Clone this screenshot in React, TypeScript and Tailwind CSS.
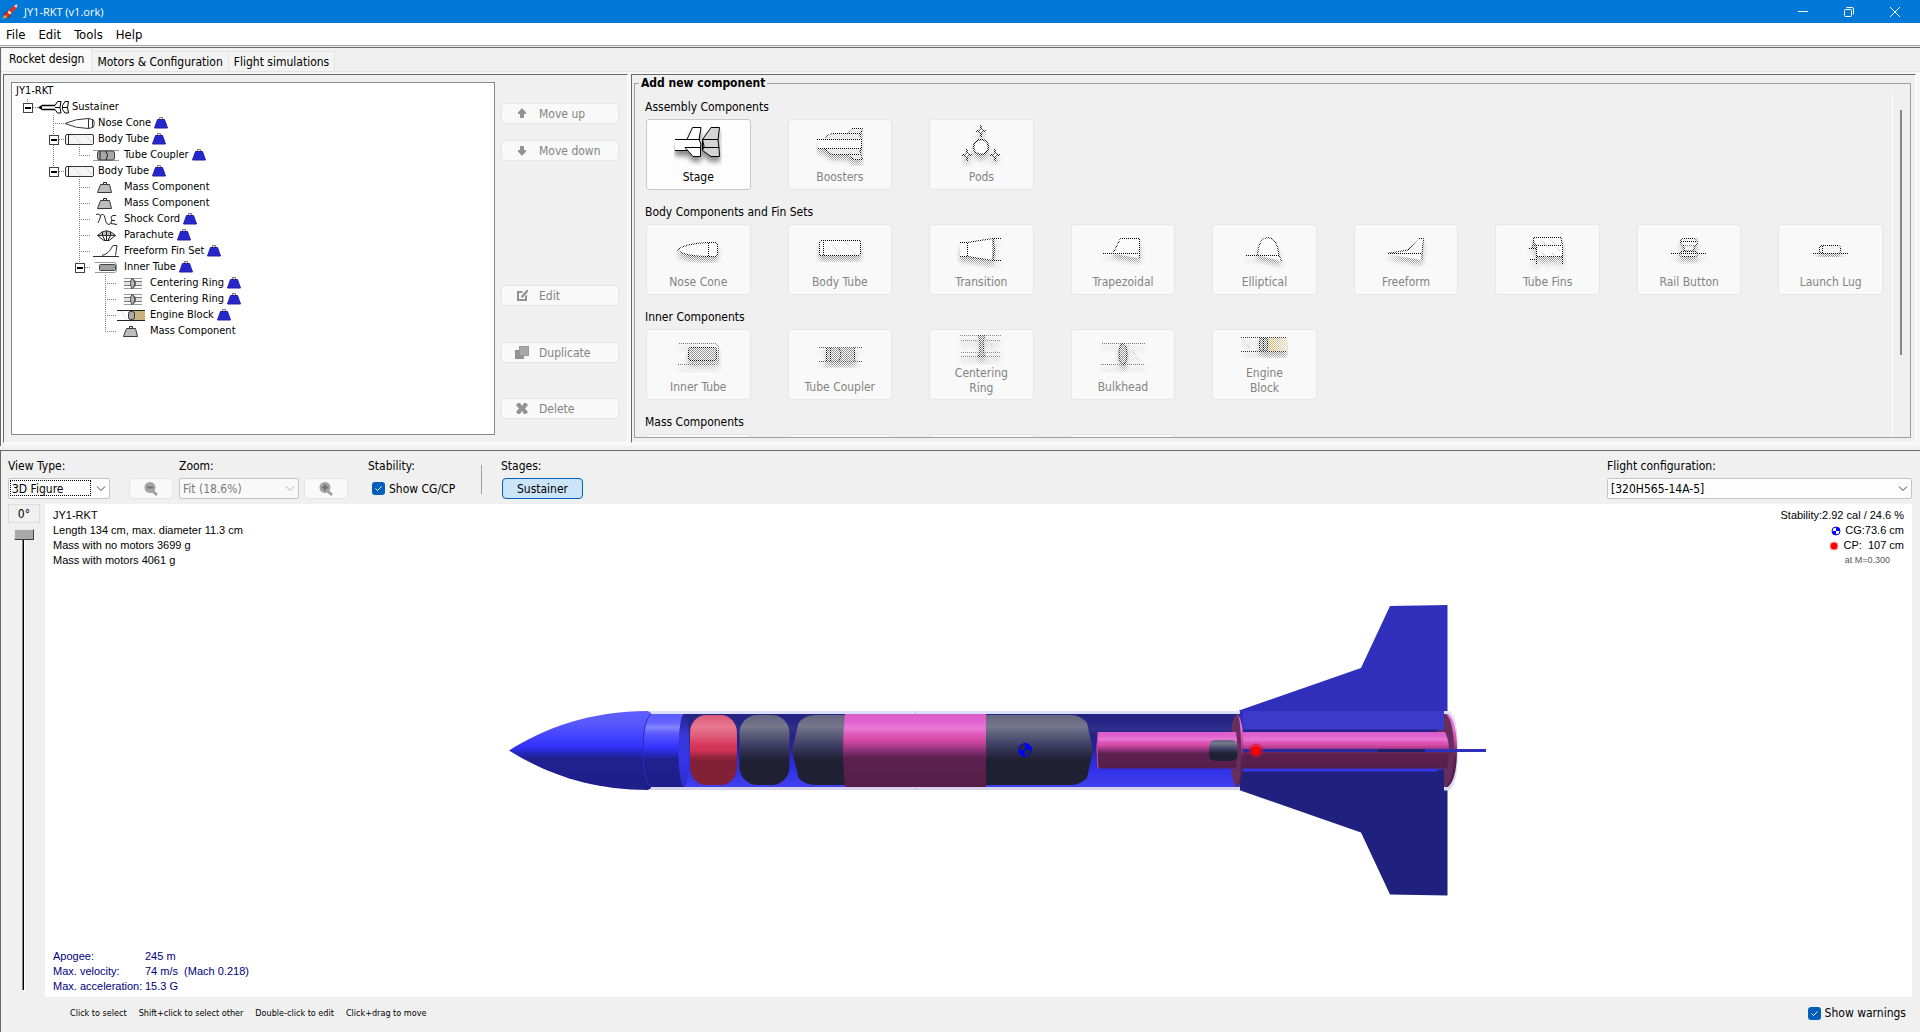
import React from 'react';
import clsx from 'clsx';

const ui = 'font-["DejaVu_Sans_Condensed","Noto_Sans",sans-serif]';

/* ---------- tree ---------- */

type Guide = '' | 'v' | 't' | 'l' | 'box' | 'boxEnd';

interface TreeRow {
  guides: Guide[];
  icon: keyof typeof treeIcons;
  label: string;
  mass?: boolean;
}

const ink = { fill: 'none', stroke: '#222', strokeWidth: 1 };

const treeIcons = {
  stage: (
    <g>
      <path d="M0 8.5 L4 6 V11 Z" fill="#000" />
      <path d="M4 6.5 H18 M4 10.5 H18" stroke="#000" strokeWidth="1.5" fill="none" />
      <path d="M17 6.5 L19.5 2.5 H23 L22 8.5 L23 14 H19.5 L17 10.5 M17 8.5 H22" fill="#fff" stroke="#000" />
      <path d="M24.5 6.5 L27 2.5 H30.5 L29.5 8.5 L30.5 14 H27 L24.5 10.5 Z M24.5 8.5 H29.5" fill="#fff" stroke="#000" />
    </g>
  ),
  noseCone: (
    <path d="M1 8.5 Q12 3.5 24.5 3.5 V13.5 Q12 13.5 1 8.5 Z M24.5 3.5 L28.5 4.5 V12.5 L24.5 13.5 M28.5 4 Q32 8.5 28.5 13" fill="#fff" stroke="#333" />
  ),
  bodyTube: (
    <g>
      <rect x="1.5" y="3.5" width="28" height="10" rx="1.5" fill="#f4f4f4" stroke="#333" />
      <path d="M4.5 4 V13" {...ink} />
      <path d="M9 4 L17 13 M21 4 L29 13" stroke="#ddd" />
    </g>
  ),
  coupler: (
    <g>
      <path d="M3 3.5 H29 M3 13.5 H29" stroke="#999" />
      <rect x="7.5" y="4" width="17" height="9" rx="2" fill="#a8a8a8" stroke="#444" />
      <path d="M16 4 Q19 8.5 16 13 M10 4 V13" {...ink} />
    </g>
  ),
  mass: (
    <g>
      <path d="M10.5 5.5 H19.5 L21.5 13.5 H7.5 Z" fill="#bdbdbd" stroke="#3a3a3a" />
      <path d="M13.5 5 V3.5 H16.5 V5" {...ink} />
    </g>
  ),
  shockCord: (
    <path d="M6 3.5 Q10 2 10.5 6 Q9 10 8 12 M10 4.5 Q14 1.5 15 7 Q16 13.5 19 13.5 Q21 13 22 9 Q20 5.5 23 4.5 H26 M22 9.5 H25 M21 12.5 L27 13.5" {...ink} />
  ),
  parachute: (
    <g>
      <path d="M7.5 8.5 Q16.5 -1 25.5 8.5 Z" fill="#bbb" stroke="#333" />
      <path d="M7.5 8.5 L14 13.5 H19 L25.5 8.5 M12.5 5 V8.5 L15 13.5 M20.5 5 V8.5 L18 13.5 M16.5 4 V13" {...ink} />
    </g>
  ),
  freeform: (
    <g>
      <path d="M12 12.5 Q19 10.5 22 4 L23 2.5 H27 L25.5 12.5" fill="#fff" stroke="#333" />
      <path d="M3 13.5 H29" stroke="#333" />
    </g>
  ),
  innerTube: (
    <g>
      <path d="M5 3.5 H24 Q26.5 3.5 26.5 6 V11 Q26.5 13.5 24 13.5 H5" fill="none" stroke="#999" />
      <rect x="9.5" y="5.5" width="16" height="6" rx="1" fill="#a0a0a0" stroke="#444" />
    </g>
  ),
  centeringRing: (
    <g>
      <path d="M8 3.5 H26 M8 13.5 H26" stroke="#999" />
      <rect x="8" y="6" width="18" height="5" fill="#e0e0e0" />
      <path d="M8 6.5 H26 M8 10.5 H26" stroke="#777" />
      <path d="M15 3.5 Q20 5 19.5 8.5 Q20 12 15 13.5" fill="none" stroke="#444" />
      <ellipse cx="16.5" cy="8.5" rx="2" ry="4.5" fill="#bbb" stroke="#444" />
    </g>
  ),
  engineBlock: (
    <g>
      <rect x="18" y="3" width="11" height="11" fill="#c9b27c" />
      <path d="M1 3.5 H29 M1 13.5 H29" stroke="#222" />
      <path d="M5 4 L11 13" stroke="#ddd" />
      <rect x="12.5" y="4.5" width="6" height="8" rx="2" fill="#aaa" stroke="#333" />
    </g>
  ),
};

const treeRows: TreeRow[] = [
  { guides: ['boxEnd'], icon: 'stage', label: 'Sustainer' },
  { guides: ['', 't'], icon: 'noseCone', label: 'Nose Cone', mass: true },
  { guides: ['', 'box'], icon: 'bodyTube', label: 'Body Tube', mass: true },
  { guides: ['', 'v', 'l'], icon: 'coupler', label: 'Tube Coupler', mass: true },
  { guides: ['', 'boxEnd'], icon: 'bodyTube', label: 'Body Tube', mass: true },
  { guides: ['', '', 't'], icon: 'mass', label: 'Mass Component' },
  { guides: ['', '', 't'], icon: 'mass', label: 'Mass Component' },
  { guides: ['', '', 't'], icon: 'shockCord', label: 'Shock Cord', mass: true },
  { guides: ['', '', 't'], icon: 'parachute', label: 'Parachute', mass: true },
  { guides: ['', '', 't'], icon: 'freeform', label: 'Freeform Fin Set', mass: true },
  { guides: ['', '', 'boxEnd'], icon: 'innerTube', label: 'Inner Tube', mass: true },
  { guides: ['', '', '', 't'], icon: 'centeringRing', label: 'Centering Ring', mass: true },
  { guides: ['', '', '', 't'], icon: 'centeringRing', label: 'Centering Ring', mass: true },
  { guides: ['', '', '', 't'], icon: 'engineBlock', label: 'Engine Block', mass: true },
  { guides: ['', '', '', 'l'], icon: 'mass', label: 'Mass Component' },
];

const GuideCell: React.FC<{ kind: Guide }> = ({ kind }) => {
  const dots = { stroke: '#808080', strokeWidth: 1, strokeDasharray: '1 1', fill: 'none' };

  if (kind === 'box' || kind === 'boxEnd') {
    return (
      <button type="button" aria-label="Collapse" className="block h-4 w-[26px] shrink-0">
        <svg width="26" height="16" className="block">
          <path d={kind === 'box' ? 'M15.5 0 V16 M15 8.5 H26' : 'M15.5 0 V8 M15 8.5 H26'} {...dots} />
          <rect x="11.5" y="4.5" width="9" height="9" fill="#fff" stroke="#404040" />
          <path d="M13 9 H19" stroke="#000" strokeWidth="2" />
        </svg>
      </button>
    );
  }

  return (
    <svg width="26" height="16" className="block shrink-0">
      {kind === 'v' && <path d="M15.5 0 V16" {...dots} />}
      {kind === 't' && <path d="M15.5 0 V16 M15 8.5 H26" {...dots} />}
      {kind === 'l' && <path d="M15.5 0 V8 M15 8.5 H26" {...dots} />}
    </svg>
  );
};

const MassBadge = () => (
  <svg width="14" height="12" className="ml-[3px] block shrink-0">
    <path d="M5.5 2.5 V0.5 H8.5 V2.5" fill="none" stroke="#777" />
    <path d="M3.5 2.5 H10.5 L13.5 11 H0.5 Z" fill="#2727d0" stroke="#2222a0" />
  </svg>
);

const ComponentTree = () => (
  <div className="flex-1 border border-[#828790] bg-white text-[11px] leading-4 text-black">
    <div className="pl-1">JY1-RKT</div>
    {treeRows.map((row, i) => (
      <div key={i} className="flex h-4 items-center">
        {row.guides.map((g, j) => (
          <GuideCell key={j} kind={g} />
        ))}
        <svg width="32" height="16" className="block shrink-0">
          {treeIcons[row.icon]}
        </svg>
        <span className="ml-[2px] whitespace-nowrap">{row.label}</span>
        {row.mass && <MassBadge />}
      </div>
    ))}
  </div>
);

/* ---------- tree actions ---------- */

const actions = [
  { label: 'Move up', gap: 'mt-[21px]', icon: <path d="M7 1 L11 5.5 V7 H9 V11 H5 V7 H3 V5.5 Z" /> },
  { label: 'Move down', gap: 'mt-4', icon: <path d="M7 12 L11 7.5 V6 H9 V2 H5 V6 H3 V7.5 Z" /> },
  {
    label: 'Edit',
    gap: 'mt-[124px]',
    icon: <path d="M2 2 H8 L7 4 H4 V10 H10 V7.5 L12 5.5 V12 H2 Z M12 0.5 L13.5 2 L8.5 8 L6 9 L6.5 6.5 Z" />,
  },
  {
    label: 'Duplicate',
    gap: 'mt-9',
    icon: (
      <g>
        <rect x="4.5" y="0.5" width="9" height="9" fill="#a8a8a8" stroke="#989898" />
        <path d="M0 4 H4 V10 H9 V13 H0 Z" />
      </g>
    ),
  },
  {
    label: 'Delete',
    gap: 'mt-[35px]',
    icon: <path d="M3 1 H5 L7 4 L9 1 H11 L13 3 L10 6.5 L13 10 L11 12 H9 L7 9 L5 12 H3 L1 10 L4 6.5 L1 3 Z" />,
  },
];

const TreeActions = () => (
  <div className="ml-1.5 mr-2 flex w-[118px] flex-col">
    {actions.map(a => (
      <button
        key={a.label}
        type="button"
        disabled
        className={clsx(
          'flex h-[21px] shrink-0 items-center gap-2.5 rounded-[3px] border border-[#e6e6e6] bg-[#f9f9f9] pl-[13px] text-[12px] leading-4 text-[#838383]',
          a.gap
        )}
      >
        <svg width="14" height="13" fill="#929292" className="block">
          {a.icon}
        </svg>
        {a.label}
      </button>
    ))}
  </div>
);

/* ---------- component palette ---------- */

interface PaletteItem {
  label: string;
  icon: React.ReactNode;
  enabled?: boolean;
  twoLines?: boolean;
}

// four-pointed pod cross section
const star = (x: number, y: number) => (
  <path d={`M${x} ${y - 6} L${x + 1} ${y - 1} L${x + 5} ${y} L${x + 1} ${y + 1} L${x} ${y + 6} L${x - 1} ${y + 1} L${x - 5} ${y} L${x - 1} ${y - 1} Z`} fill="#fff" />
);

const palette: { title: string; items: PaletteItem[] }[] = [
  {
    title: 'Assembly Components',
    items: [
      {
        label: 'Stage',
        enabled: true,
        icon: (
          <g>
            <path d="M1 17.5 H26 L26.5 28 H1 Z" fill="#fff" stroke="none" />
            <path d="M1 17.5 H26 M1 28.5 H15 M25 17.5 L27 22 L26 28" />
            <path d="M13 17.5 L18.5 5.5 H27 L25 17.5 Z M11 25.5 H26.5 V34.5 H19 Z" fill="#fff" />
            <path d="M28.5 17.5 L37 5.5 H45.5 L44 17.5 L45 25.5 L45.5 34.5 H37 L28.5 28.5 Z M28.5 17.5 H44 M28.5 25.5 H45 M28.5 17.5 L30 24 L28.5 28.5" fill="#d4d4d4" />
          </g>
        ),
      },
      {
        label: 'Boosters',
        icon: (
          <g>
            <path d="M9.5 16.5 Q11 12.5 17 11.5 H31 L35.5 6.5 H46.5 L44 14 L45.5 17 V26.5 L44 29.5 L46.5 37.5 H38 L31 32.5 H17 Q11 31.5 9.5 27" fill="#ddd" />
            <path d="M2 17.5 H45 V26.5 H2 Z" fill="#fff" stroke="none" />
            <path d="M1 17.5 H45 M1 26.5 H45 M31 11.5 H44 M31 32.5 H44" />
          </g>
        ),
      },
      {
        label: 'Pods',
        icon: (
          <g>
            <circle cx="24" cy="25" r="7.5" fill="#fff" strokeWidth="1.5" />
            {star(24, 9)}
            {star(10, 33)}
            {star(38, 33)}
          </g>
        ),
      },
    ],
  },
  {
    title: 'Body Components and Fin Sets',
    items: [
      {
        label: 'Nose Cone',
        icon: <path d="M3.5 23 Q10 16.5 34.5 15.5 H41 Q43.5 15.5 43.5 18 V27 Q43.5 29.5 41 29.5 H34.5 Q10 29.5 3.5 23 Z M34.5 15.5 V29.5" fill="#fff" />,
      },
      {
        label: 'Body Tube',
        icon: (
          <g>
            <rect x="3.5" y="13.5" width="41" height="15" rx="1.5" fill="#fff" />
            <path d="M7.5 14 V28" />
            <path d="M13 14 L25 28 M28 14 L40 28" stroke="#ccc" />
          </g>
        ),
      },
      {
        label: 'Transition',
        icon: <path d="M3 15.5 H10 L36 11.5 V33.5 L10 29.5 H3 M10.5 15.5 V29.5 M36 11.5 Q39 22 36 33.5 M36 11.5 H44 M36 33.5 H44" fill="#fff" />,
      },
      {
        label: 'Trapezoidal',
        icon: <path d="M14 26.5 L21.5 11.5 H40.5 V31 M4 26.5 H40" fill="#fff" />,
      },
      {
        label: 'Elliptical',
        icon: <path d="M17.5 28 Q18.5 10.5 28 10.5 Q37 10.5 39 28 L41.5 34 M5 28.5 H39" fill="#fff" />,
      },
      {
        label: 'Freeform',
        icon: <path d="M5 26.5 L26 23 L36.5 11.5 H41.5 L40 26.5 V33 M5 26.5 H40" fill="#fff" />,
      },
      {
        label: 'Tube Fins',
        icon: (
          <g>
            <path d="M9.5 10.5 H37 L38.5 18.5 V29.5 H12.5 V18.5 L9.5 14 Z" fill="#fff" />
            <path d="M10 18.5 H38 M12.5 29.5 V38 M38.5 29.5 V38 M5 21.5 H12 M5 32.5 H12 M9.5 14 L8.5 21" />
            <path d="M17 12 L25 22 M27 12 L36 24 M17 24 L26 36 M28 26 L36 36" stroke="#bbb" />
          </g>
        ),
      },
      {
        label: 'Rail Button',
        icon: (
          <g>
            <rect x="15.5" y="11.5" width="17" height="7" rx="3" fill="#eee" />
            <path d="M18.5 18.5 L19.5 24 H28.5 L29.5 18.5" fill="#eee" />
            <rect x="14.5" y="24.5" width="18" height="5" rx="2.5" fill="#eee" />
            <path d="M6 26.5 H41 M16 14.5 H32" />
          </g>
        ),
      },
      {
        label: 'Launch Lug',
        icon: (
          <g>
            <rect x="12.5" y="18.5" width="21" height="8" rx="2.5" fill="#eee" />
            <path d="M6 26.5 H41 M15.5 19 V26" />
          </g>
        ),
      },
    ],
  },
  {
    title: 'Inner Components',
    items: [
      {
        label: 'Inner Tube',
        icon: (
          <g>
            <path d="M4 11.5 H41 Q44.5 12 44.5 15 V29 Q44.5 32.5 41 32.5 H4" stroke="#777" fill="none" />
            <rect x="14.5" y="15.5" width="28" height="13" rx="2.5" fill="#999" />
          </g>
        ),
      },
      {
        label: 'Tube Coupler',
        icon: (
          <g>
            <rect x="10.5" y="15.5" width="28" height="14" rx="1.5" fill="#999" />
            <path d="M3 15.5 H46 M3 29.5 H46" stroke="#555" />
            <path d="M22.5 15.5 Q27 22 22.5 29.5 M14.5 16 V29" />
          </g>
        ),
      },
      {
        label: 'Centering Ring',
        twoLines: true,
        icon: (
          <g>
            <path d="M3 3.5 H44 M3 8.5 H44 M3 20.5 H44 M3 24.5 H44" stroke="#888" />
            <path d="M32 9 L40 20" stroke="#bbb" />
            <path d="M21 3.5 H28 L26.5 8 V20 L28 24.5 H21 L23 20 V8 Z" fill="#888" stroke="#333" />
          </g>
        ),
      },
      {
        label: 'Bulkhead',
        icon: (
          <g>
            <path d="M2 11.5 H46 M2 32.5 H46" stroke="#777" />
            <path d="M29 13 L40 28" stroke="#bbb" />
            <ellipse cx="24" cy="22" rx="4" ry="10.5" fill="#999" />
          </g>
        ),
      },
      {
        label: 'Engine Block',
        twoLines: true,
        icon: (
          <g>
            <rect x="26" y="6" width="21" height="14" fill="url(#wood)" stroke="none" />
            <path d="M1 5.5 H47 M1 19.5 H47" stroke="#333" />
            <path d="M3 7 L11 18" stroke="#bbb" />
            <rect x="19.500" y="6" width="8" height="13" rx="3" fill="#888" />
            <path d="M23.5 7 V18" />
          </g>
        ),
      },
    ],
  },
];

const PaletteButton: React.FC<{ item: PaletteItem }> = ({ item }) => {
  const height = item.twoLines ? 34 : 44;

  return (
    <button
      type="button"
      disabled={!item.enabled}
      className={clsx(
        'flex h-[71px] flex-col items-center rounded-[3px] border pt-[2px] text-[12px]',
        item.enabled ? 'border-[#c8c8c8] bg-[#fdfdfd] text-black' : 'border-[#e6e6e6] bg-[#f9f9f9] text-[#838383]'
      )}
    >
      <svg width="48" height={height} className="block shrink-0">
        <g mask={item.enabled ? undefined : 'url(#dither)'}>
          <g fill="none" stroke="#000" filter="url(#iconShadow)">
            {item.icon}
          </g>
        </g>
      </svg>
      <span className={item.twoLines ? 'w-[60px] leading-[15px]' : 'mt-[3px] leading-4'}>{item.label}</span>
    </button>
  );
};

const ComponentPalette = () => (
  <fieldset className="mb-1 ml-[2px] mr-1 flex min-h-0 min-w-0 flex-1 flex-col border border-[#a0a0a0]">
    <legend className="ml-1 px-[2px] text-[12px] leading-4 font-bold">Add new component</legend>
    <div className="flex min-h-0 flex-1 overflow-hidden">
      <div className="min-w-0 flex-1 pl-2.5 pr-[9px] pt-2">
        {palette.map(section => (
          <section key={section.title} className="mb-3.5">
            <h3 className="mb-1 text-[12px] leading-4">{section.title}</h3>
            <div className="grid grid-cols-9 gap-[37px] pl-px">
              {section.items.map(item => (
                <PaletteButton key={item.label} item={item} />
              ))}
            </div>
          </section>
        ))}
        <h3 className="mb-1 text-[12px] leading-4">Mass Components</h3>
        <div className="grid grid-cols-9 gap-[37px] pl-px">
          {[0, 1, 2, 3].map(i => (
            <div key={i} className="h-[3px] rounded-t-[3px] border border-b-0 border-[#e6e6e6] bg-[#f9f9f9]" />
          ))}
        </div>
      </div>
      <div className="mt-[2px] w-[18px] border-l border-white pl-[7px] pt-[17px]">
        <div className="h-[245px] w-[2px] bg-[#878787]" />
      </div>
    </div>
  </fieldset>
);

/* ---------- figure toolbar ---------- */

const Chevron: React.FC<{ className?: string }> = ({ className }) => (
  <svg width="10" height="6" className={clsx('pointer-events-none absolute right-1 top-2', className)}>
    <path d="M1 0.5 L5 4.5 L9 0.5" fill="none" stroke="currentColor" />
  </svg>
);

const selectBase = 'block h-[21px] w-full appearance-none rounded-[2px] border border-[#c4c4c4] pl-[3px] pr-4 text-[12px] leading-4';

const ZoomButton: React.FC<{ label: string; children: React.ReactNode }> = ({ label, children }) => (
  <button
    type="button"
    disabled
    aria-label={label}
    className="flex h-[21px] w-11 items-center justify-center rounded-[3px] border border-[#e6e6e6] bg-[#f9f9f9]"
  >
    <svg width="14" height="14">
      <path d="M8 8.5 L13 13" stroke="#9a9a9a" strokeWidth="2.5" />
      <circle cx="6" cy="5.5" r="5.5" fill="#a4a4a4" />
      {children}
    </svg>
  </button>
);

const CheckBox: React.FC<{ id: string; label: string }> = ({ id, label }) => (
  <div className="flex items-center gap-1">
    <span className="relative block h-[13px] w-[13px]">
      <input id={id} type="checkbox" defaultChecked className="block h-[13px] w-[13px] appearance-none rounded-[3px] bg-[#005fb8]" />
      <svg width="13" height="13" className="pointer-events-none absolute left-0 top-0">
        <path d="M3.5 6.5 L5.5 8.5 L9.5 4.5" fill="none" stroke="#fff" />
      </svg>
    </span>
    <label htmlFor={id} className="text-[12px] leading-4 whitespace-nowrap">{label}</label>
  </div>
);

const FigureToolbar = () => (
  <div className="flex items-end pb-[5px] pl-[7px] pr-2 pt-[7px] text-[12px] leading-4">
    <div className="w-[102px]">
      <label htmlFor="view-type" className="mb-1 block">View Type:</label>
      <div className="relative">
        <select id="view-type" className={clsx(selectBase, 'bg-[#fdfdfd] text-black')}>
          <option>3D Figure</option>
        </select>
        <span className="pointer-events-none absolute bottom-[3px] left-[2px] right-[19px] top-[2px] border border-dotted border-black" />
        <Chevron className="text-[#444]" />
      </div>
    </div>
    <div className="ml-[19px]">
      <ZoomButton label="Zoom out">
        <path d="M3 5.5 H9" stroke="#707070" strokeWidth="2" />
      </ZoomButton>
    </div>
    <div className="ml-1.5 w-[120px]">
      <label htmlFor="zoom" className="mb-1 block">Zoom:</label>
      <div className="relative">
        <select id="zoom" disabled className={clsx(selectBase, 'bg-[#f9f9f9] text-[#7a7a7a] opacity-100')}>
          <option>Fit (18.6%)</option>
        </select>
        <Chevron className="text-[#b0b0b0]" />
      </div>
    </div>
    <div className="ml-[5px]">
      <ZoomButton label="Zoom in">
        <path d="M3 5.5 H9 M6 2.5 V8.5" stroke="#707070" strokeWidth="2" />
      </ZoomButton>
    </div>
    <div className="ml-5 w-[113px]">
      <div className="mb-1">Stability:</div>
      <div className="flex h-[21px] items-center pl-1">
        <CheckBox id="show-cgcp" label="Show CG/CP" />
      </div>
    </div>
    <div className="mb-[5px] h-[29px] w-px bg-[#a0a0a0]" />
    <div className="ml-[19px]">
      <div className="mb-1">Stages:</div>
      <button type="button" className="ml-px h-[21px] w-[81px] rounded-[4px] border border-[#005fb8] bg-[#cce4f7]">
        Sustainer
      </button>
    </div>
    <div className="ml-auto w-[305px]">
      <label htmlFor="flight-config" className="mb-1 block">Flight configuration:</label>
      <div className="relative">
        <select id="flight-config" className={clsx(selectBase, 'bg-[#fdfdfd] text-black')}>
          <option>[320H565-14A-5]</option>
        </select>
        <Chevron className="text-[#444]" />
      </div>
    </div>
  </div>
);

/* ---------- figure ---------- */

const CgMarker: React.FC<{ cx: number; cy: number; r: number; back: string }> = ({ cx, cy, r, back }) => (
  <g>
    <circle cx={cx} cy={cy} r={r} fill={back} stroke="#0000ff" />
    <path
      d={`M${cx} ${cy} V${cy - r} A${r} ${r} 0 0 1 ${cx + r} ${cy} Z M${cx} ${cy} V${cy + r} A${r} ${r} 0 0 1 ${cx - r} ${cy} Z`}
      fill="#0000ff"
    />
  </g>
);

const Stops: React.FC<{ stops: [number, string][] }> = ({ stops }) => (
  <>
    {stops.map(([o, c]) => (
      <stop key={o} offset={o} stopColor={c} />
    ))}
  </>
);

const RocketFigure = () => (
  <svg viewBox="45 504 1867 493" className="absolute inset-0 h-full w-full">
    <defs>
      <linearGradient id="nose" x1="0" y1="0" x2="0" y2="1">
        <Stops stops={[[0, '#5e5eff'], [0.15, '#5858fa'], [0.3, '#4545ff'], [0.45, '#3232fa'], [0.52, '#2828c8'], [0.6, '#20208f'], [1, '#1e1e8a']]} />
      </linearGradient>
      <linearGradient id="shoulder" x1="0" y1="0" x2="0" y2="1">
        <Stops stops={[[0, '#5c5cff'], [0.12, '#6464ff'], [0.18, '#8484ff'], [0.27, '#5a5aff'], [0.45, '#3434ff'], [0.53, '#2a2ad0'], [0.62, '#20208f'], [1, '#1e1e8a']]} />
      </linearGradient>
      <linearGradient id="shoulderEnd" x1="0" y1="0" x2="0" y2="1">
        <Stops stops={[[0, '#242490'], [0.3, '#3838d8'], [0.7, '#3434e8'], [1, '#2c2cc8']]} />
      </linearGradient>
      <linearGradient id="bore" x1="0" y1="0" x2="0" y2="1">
        <Stops stops={[[0, '#242482'], [0.12, '#26268a'], [0.2, '#30308c'], [0.3, '#232380'], [0.45, '#22229a'], [0.6, '#2a2ac8'], [0.75, '#3030e8'], [1, '#4040ec']]} />
      </linearGradient>
      <linearGradient id="red" x1="0" y1="0" x2="0" y2="1">
        <Stops stops={[[0, '#da5878'], [0.17, '#e87890'], [0.3, '#de5c78'], [0.42, '#d83a5c'], [0.52, '#cc3052'], [0.58, '#a02642'], [0.65, '#822038'], [1, '#822038']]} />
      </linearGradient>
      <linearGradient id="dark" x1="0" y1="0" x2="0" y2="1">
        <Stops stops={[[0, '#646480'], [0.17, '#76768c'], [0.3, '#585878'], [0.42, '#404068'], [0.55, '#2c2c48'], [0.64, '#202034'], [1, '#202034']]} />
      </linearGradient>
      <linearGradient id="pink" x1="0" y1="0" x2="0" y2="1">
        <Stops stops={[[0, '#dc5cca'], [0.1, '#e062d0'], [0.2, '#e878d4'], [0.28, '#dc58ba'], [0.36, '#d44aa4'], [0.5, '#8c3078'], [0.6, '#5c2050'], [1, '#561e4a']]} />
      </linearGradient>
    </defs>

    {/* fins */}
    <path d="M1239 710.5 L1361 668 L1390 606 L1447.5 605 V790 H1239 Z" fill="#302fbb" />
    <path d="M1239 790 L1361 832.5 L1390 894.5 L1447.5 895.5 V770 H1239 Z" fill="#20207f" />

    {/* body tube */}
    <rect x="650" y="711" width="590" height="4" fill="#dde0fd" />
    <rect x="650" y="787" width="590" height="3" fill="#d8d4ec" />
    <rect x="684" y="714" width="556" height="73" fill="url(#bore)" />
    <path d="M915.5 711 V714 M915.5 787 V790" stroke="#b8bcf8" />

    {/* nose cone */}
    <path d="M509 750.5 C545 728 590 711 648 711 L651 713 V788 L648 790 C590 790 545 773 509 750.5 Z" fill="url(#nose)" />
    <path d="M648 714 H684 V787 H648 Q638 750 648 714 Z" fill="url(#shoulder)" />
    <path d="M651 714 Q643 720 643 750.5 Q643 781 651 787" fill="none" stroke="#2c2cc8" />
    <ellipse cx="684" cy="750.5" rx="5.5" ry="36.5" fill="url(#shoulderEnd)" />

    {/* masses, parachute and coupler */}
    <rect x="690" y="715" width="47" height="70" rx="16" ry="18" fill="url(#red)" />
    <rect x="739.5" y="715" width="50" height="70" rx="18" ry="18" fill="url(#dark)" />
    <path d="M792 750.5 L798.5 723 Q805 715 815 715 H845 V785 H815 Q805 785 798.5 778 Z" fill="url(#dark)" />
    <path d="M985 715 H1071 Q1080 715 1087 723 L1093 750.5 L1087 778 Q1080 785 1071 785 H985 Z" fill="url(#dark)" />
    <path d="M845 714 H986 V787 H845 Q841 750 845 714 Z" fill="url(#pink)" />

    {/* motor mount */}
    <path d="M1098 732 H1238 V768.5 H1098 Q1095 750 1098 732 Z" fill="url(#pink)" />
    <path d="M1098 732 Q1096 750 1098 768.5" fill="none" stroke="#c84aa8" />
    <rect x="1243" y="711" width="201" height="18.5" fill="#3c3acb" />
    <rect x="1243" y="729.5" width="194" height="2.5" fill="#24248a" />
    <rect x="1243" y="768.5" width="194" height="3" fill="#3636e8" />
    <path d="M1444 711 H1449 Q1458 716 1458 750.5 Q1458 785 1449 790.5 H1444 V787 H1447 V714 H1444 Z" fill="#dcdcf4" />
    <path d="M1444 714 H1448 Q1457 722 1457 750.5 Q1457 779 1448 787 H1444 Z" fill="url(#pink)" />
    <path d="M1444 714 H1446 Q1454 722 1454 750.5 Q1454 779 1446 787 H1444 V769 H1437 V730 H1444 Z" fill="#662e5c" />
    <path d="M1243 732 H1445 Q1449 740 1449 750.5 Q1449 761 1447 768.5 H1243 Z" fill="url(#pink)" />
    <path d="M1237 714 Q1243.5 718 1243.5 750.5 Q1243.5 783 1237 787 Z" fill="url(#pink)" />
    <path d="M1237 714 Q1231.5 718 1231.5 732 H1236 Q1239 750 1236 768.5 H1231.5 Q1231.5 783 1237 787 Q1241 783 1241 750.5 Q1241 718 1237 714 Z" fill="#662e5c" />
    <rect x="1209" y="740" width="28.5" height="21" rx="6" fill="url(#dark)" />

    {/* edge-on fin */}
    <rect x="1243" y="749" width="136" height="3" fill="#2a2aa0" />
    <rect x="1378" y="749" width="47" height="3" fill="#201e70" />
    <rect x="1425" y="749" width="61" height="3" fill="#302fbb" />

    <CgMarker cx={1025} cy={750} r={6.5} back="#282840" />
    <circle cx="1256" cy="750.5" r="6.5" fill="none" stroke="#e01030" />
    <circle cx="1256" cy="750.5" r="5" fill="#ff0000" />
  </svg>
);

const summary = ['JY1-RKT', 'Length 134 cm, max. diameter 11.3 cm', 'Mass with no motors 3699 g', 'Mass with motors 4061 g'];

const flightData = [
  ['Apogee:', '245 m'],
  ['Max. velocity:', '74 m/s  (Mach 0.218)'],
  ['Max. acceleration:', '15.3 G'],
];

const FigureCanvas = () => (
  <div className='relative ml-[5px] flex flex-1 flex-col justify-between bg-white px-2 pb-[3px] pt-1 font-["Liberation_Sans",Arial,sans-serif] text-[11px] leading-[15px]'>
    <RocketFigure />
    <div className="relative flex justify-between">
      <div>
        {summary.map(line => (
          <p key={line}>{line}</p>
        ))}
      </div>
      <div className="flex flex-col items-end">
        <p>Stability:2.92 cal / 24.6 %</p>
        <p className="flex items-center gap-1">
          <svg width="10" height="10">
            <CgMarker cx={5} cy={5} r={4} back="#fff" />
          </svg>
          CG:73.6 cm
        </p>
        <p className="flex items-center gap-1">
          <svg width="10" height="10">
            <circle cx="5" cy="5" r="4" fill="#ff0000" stroke="#ff9a9a" />
          </svg>
          <span>CP:&nbsp; 107 cm</span>
        </p>
        <p className="mr-3.5 text-[9px] text-[#555]">at M=0.300</p>
      </div>
    </div>
    <dl className="relative grid grid-cols-[92px_auto] justify-start whitespace-pre text-[#000080]">
      {flightData.map(([name, value]) => (
        <React.Fragment key={name}>
          <dt>{name}</dt>
          <dd>{value}</dd>
        </React.Fragment>
      ))}
    </dl>
  </div>
);

const RotationSlider = () => (
  <div className="flex w-8 flex-col items-center">
    <label htmlFor="rotation" className="flex h-[19px] w-8 items-center justify-center border border-[#dcdcdc] text-[12px] leading-4">
      0°
    </label>
    <input
      id="rotation"
      type="range"
      min={0}
      max={360}
      defaultValue={0}
      className="mb-[7px] mt-1.5 w-5 flex-1 appearance-none bg-[linear-gradient(to_right,transparent_8px,#808080_8px,#808080_9px,#000_9px,#000_10px,#fff_10px,#fff_11px,transparent_11px)] [writing-mode:vertical-lr] [&::-webkit-slider-thumb]:h-[11px] [&::-webkit-slider-thumb]:w-5 [&::-webkit-slider-thumb]:appearance-none [&::-webkit-slider-thumb]:border [&::-webkit-slider-thumb]:border-b-[#404040] [&::-webkit-slider-thumb]:border-l-[#e8e8e8] [&::-webkit-slider-thumb]:border-r-[#404040] [&::-webkit-slider-thumb]:border-t-[#e8e8e8] [&::-webkit-slider-thumb]:bg-[#a8a8a8]"
    />
  </div>
);

/* ---------- window chrome ---------- */

const TitleBar = () => (
  <header className="flex h-[23px] items-center bg-[#0078d7] pr-[2px] text-white">
    <svg width="16" height="16" viewBox="0 0 16 16" className="ml-[2px]">
      <path d="M0 15 L3 10 L6 13 Z" fill="#e0a040" />
      <path d="M1 11 L5 7 L6.5 9 L3 11.5 Z M6 14.5 L9.5 10.5 L7.5 9 L5 12.5 Z" fill="#b01c10" />
      <path d="M3.5 10.5 L9 4 Q12 1 15.5 0.5 Q15 4 12 7 L6 12.5 Z" fill="#e03020" />
      <path d="M7 6.5 L9.5 9 L8 10.5 L5.5 8.5 Z" fill="#e8e8f0" />
      <path d="M12 1.8 Q14 0.5 15.5 0.5 Q15.5 2 14.2 4 Z" fill="#ffd8c8" />
    </svg>
    <h1 className='ml-1.5 flex-1 font-["Open_Sans","Noto_Sans",sans-serif] text-[11px] leading-4'>JY1-RKT (v1.ork)</h1>
    <button type="button" aria-label="Minimize" className="flex h-full w-[46px] items-center justify-center">
      <svg width="10" height="10"><path d="M0 4.5 H10" stroke="#fff" /></svg>
    </button>
    <button type="button" aria-label="Restore" className="flex h-full w-[46px] items-center justify-center">
      <svg width="10" height="10" fill="none" stroke="#fff">
        <rect x="0.5" y="2.5" width="7" height="7" rx="1" />
        <path d="M2.5 0.5 H8 Q9.5 0.5 9.5 2 V7.5" />
      </svg>
    </button>
    <button type="button" aria-label="Close" className="flex h-full w-[46px] items-center justify-center">
      <svg width="10" height="10"><path d="M0 0 L10 10 M10 0 L0 10" stroke="#fff" /></svg>
    </button>
  </header>
);

const tabs = ['Rocket design', 'Motors & Configuration', 'Flight simulations'];

export default function App() {
  return (
    <div className={clsx('flex min-h-screen flex-col bg-[#f0f0f0] text-black', ui)}>
      <svg width="0" height="0" className="absolute">
        <defs>
          <pattern id="checker" width="2" height="2" patternUnits="userSpaceOnUse">
            <rect width="1" height="1" fill="#fff" />
            <rect x="1" y="1" width="1" height="1" fill="#fff" />
          </pattern>
          <mask id="dither" maskUnits="userSpaceOnUse" x="0" y="0" width="48" height="48">
            <rect width="48" height="48" fill="url(#checker)" shapeRendering="crispEdges" />
          </mask>
          <filter id="iconShadow" x="-20%" y="-20%" width="140%" height="160%">
            <feDropShadow dx="0" dy="5" stdDeviation="2.5" floodColor="#000" floodOpacity="0.45" />
          </filter>
          <linearGradient id="wood" x1="0" y1="0" x2="1" y2="0">
            <stop offset="0" stopColor="#c9a94e" />
            <stop offset="1" stopColor="#e8dcc0" />
          </linearGradient>
        </defs>
      </svg>

      <TitleBar />
      <nav className="flex h-[22px] shrink-0 items-center gap-[13px] bg-white pl-1.5 pt-px text-[13px] leading-4">
        {['File', 'Edit', 'Tools', 'Help'].map(m => (
          <button key={m} type="button">{m}</button>
        ))}
      </nav>

      <main className="flex flex-1 flex-col border-t border-[#a0a0a0] pt-px">
        <section className="flex h-[399px] shrink-0 flex-col border-l border-t border-[#696969]">
          <div role="tablist" className="flex h-[23px] items-end pl-px text-[12px] leading-4">
            {tabs.map((t, i) => (
              <button
                key={t}
                type="button"
                role="tab"
                aria-selected={i === 0}
                className={clsx(
                  'border-r border-[#e4e4e4]',
                  i === 0 ? 'h-[22px] bg-[#f9f9f9] px-[7px] pb-[2px]' : 'h-5 border-t bg-[#f3f3f3] px-[5px]'
                )}
              >
                {t}
              </button>
            ))}
          </div>
          <div className="flex min-h-0 flex-1 gap-[3px] border-t border-[#e4e4e4] bg-[#f7f7f7] pb-[3px] pl-[2px] pr-1 pt-[2px]">
            <div className="flex w-[625px] border border-b-white border-l-[#696969] border-r-white border-t-[#696969] bg-[#f0f0f0] pb-[7px] pl-[7px] pt-[7px]">
              <ComponentTree />
              <TreeActions />
            </div>
            <div className="flex min-w-0 flex-1 flex-col border border-b-white border-l-[#696969] border-r-white border-t-[#696969] bg-[#f0f0f0]">
              <ComponentPalette />
            </div>
          </div>
        </section>

        <section className="mt-1 flex flex-1 flex-col border-l border-t border-[#696969]">
          <FigureToolbar />
          <div className="flex flex-1 pl-[7px] pr-2">
            <RotationSlider />
            <FigureCanvas />
          </div>
          <footer className="flex h-[35px] items-center gap-3 pb-[3px] pl-[69px] pr-3.5 text-[9px] leading-4">
            <span>Click to select</span>
            <span>Shift+click to select other</span>
            <span>Double-click to edit</span>
            <span>Click+drag to move</span>
            <div className="ml-auto">
              <CheckBox id="show-warnings" label="Show warnings" />
            </div>
          </footer>
        </section>
      </main>
    </div>
  );
}
